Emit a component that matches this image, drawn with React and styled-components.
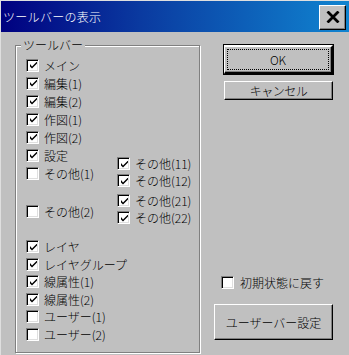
import React from 'react';
import styled, { createGlobalStyle } from 'styled-components';

const Global = createGlobalStyle`
  body {
    margin: 0;
    background: #c0c0c0;
  }
  * { box-sizing: border-box; }
`;

const FONT = `"Noto Sans CJK JP", "Noto Sans", sans-serif`;

function Check({ checked }) {
  return (
    <Box>
      {checked && (
        <svg width="7" height="7" viewBox="0 0 7 7">
          <path d="M0 2 L0 4.5 L2 6.5 L7 1.5 L7 -0.5 L2 4.5 Z" fill="#000" />
        </svg>
      )}
    </Box>
  );
}

function Item({ label, checked, h }) {
  return (
    <Row $h={h}>
      <Check checked={checked} />
      <Label>{label}</Label>
    </Row>
  );
}

function App() {
  return (
    <>
      <Global />
      <Window>
        <TitleBar>
          <Title>ツールバーの表示</Title>
          <CloseButton>
            <svg width="14" height="12" viewBox="0 0 14 12">
              <path d="M1.5 0.5 L12.5 11.5 M12.5 0.5 L1.5 11.5" stroke="#000" strokeWidth="2.8" />
            </svg>
          </CloseButton>
        </TitleBar>
        <Body>
          <GroupBox>
            <Legend>ツールバー</Legend>
            <List>
              <Item label="メイン" checked />
              <Item label="編集(1)" checked />
              <Item label="編集(2)" checked />
              <Item label="作図(1)" checked />
              <Item label="作図(2)" checked />
              <Split>
                <Column>
                  <Item label="設定" checked />
                  <Item label="その他(1)" />
                  <Gap $h={20} />
                  <Item label="その他(2)" />
                </Column>
                <SubColumn>
                  <Item label="その他(11)" checked h={17} />
                  <Item label="その他(12)" checked h={17} />
                  <Gap $h={3} />
                  <Item label="その他(21)" checked h={17} />
                  <Item label="その他(22)" checked h={17} />
                </SubColumn>
              </Split>
              <Gap $h={12} />
              <Item label="レイヤ" checked h={17.5} />
              <Item label="レイヤグループ" checked h={17.5} />
              <Item label="線属性(1)" checked h={17.5} />
              <Item label="線属性(2)" checked h={17.5} />
              <Item label="ユーザー(1)" h={17.5} />
              <Item label="ユーザー(2)" h={17.5} />
            </List>
          </GroupBox>
          <Side>
            <DefaultButton>
              <Focus>OK</Focus>
            </DefaultButton>
            <SmallButton>キャンセル</SmallButton>
            <Spacer />
            <ResetRow>
              <Check />
              <Label>初期状態に戻す</Label>
            </ResetRow>
            <BigButton>ユーザーバー設定</BigButton>
          </Side>
        </Body>
      </Window>
    </>
  );
}

const Window = styled.div`
  width: 349px;
  height: 355px;
  background: #c0c0c0;
  border-left: 1px solid #dfdfdf;
  border-top: 1px solid #dfdfdf;
  display: flex;
  flex-direction: column;
  font-family: ${FONT};
  font-weight: 300;
  overflow: hidden;
`;

const TitleBar = styled.div`
  height: 31px;
  display: flex;
  align-items: center;
  justify-content: space-between;
  padding: 0 3px 0 2px;
  background: linear-gradient(to right, #000080 0%, #0a3aa0 40%, #1084d0 100%);
`;

const Title = styled.div`
  color: #fff;
  font-size: 12px;
  letter-spacing: 0.3px;
`;

const CloseButton = styled.div`
  width: 27px;
  height: 25px;
  margin-top: 1px;
  background: #c0c0c0;
  border: 1px solid;
  border-color: #fff #000 #000 #fff;
  box-shadow: inset -1px -1px 0 #808080;
  display: flex;
  align-items: center;
  justify-content: center;
`;

const Body = styled.div`
  display: flex;
  padding: 13px 16px 0 14px;
`;

const GroupBox = styled.div`
  position: relative;
  width: 187px;
  height: 308px;
  border: 1px solid #808080;
  box-shadow: inset 1px 1px 0 #fff, 1px 1px 0 #fff;
`;

const Legend = styled.div`
  position: absolute;
  top: -9px;
  left: 5px;
  padding: 0 2px;
  background: #c0c0c0;
  font-size: 12px;
  line-height: 16px;
  color: #000;
`;

const List = styled.div`
  display: flex;
  flex-direction: column;
  padding: 10px 0 0 10px;
`;

const Row = styled.div`
  display: flex;
  align-items: center;
  height: ${(p) => p.$h || 18}px;
  gap: 5px;
`;

const Label = styled.span`
  font-size: 12px;
  color: #000;
  white-space: nowrap;
`;

const Box = styled.div`
  width: 13px;
  height: 13px;
  flex: none;
  background: #fff;
  border: 1px solid;
  border-color: #808080 #fff #fff #808080;
  box-shadow: inset 1px 1px 0 #000, inset -1px -1px 0 #dfdfdf;
  display: flex;
  align-items: center;
  justify-content: center;
  padding-left: 1px;
  padding-top: 1px;
`;

const Split = styled.div`
  display: flex;
`;

const Column = styled.div`
  display: flex;
  flex-direction: column;
  width: 91px;
`;

const SubColumn = styled.div`
  display: flex;
  flex-direction: column;
  padding-top: 9px;
`;

const Gap = styled.div`
  height: ${(p) => p.$h}px;
`;

const Side = styled.div`
  display: flex;
  flex-direction: column;
  align-items: flex-start;
  width: 119px;
  margin-left: 14px;
`;

const ButtonBase = styled.div`
  background: #c0c0c0;
  display: flex;
  align-items: center;
  justify-content: center;
  font-size: 12px;
  color: #000;
  border: 1px solid;
  border-color: #fff #000 #000 #fff;
  box-shadow: inset -1px -1px 0 #808080;
`;

const DefaultButton = styled(ButtonBase)`
  margin-left: 10px;
  width: 109px;
  height: 29px;
  outline: 1px solid #000;
  outline-offset: 0;
  border-width: 2px 2px 2px 1px;
  border-color: #fff #000 #000 #fff;
  padding: 2px;
`;

const Focus = styled.div`
  width: 100%;
  height: 100%;
  border: 1px dotted #000;
  display: flex;
  align-items: center;
  justify-content: center;
`;

const SmallButton = styled(ButtonBase)`
  margin-left: 10px;
  margin-top: 7px;
  width: 109px;
  height: 19px;
  letter-spacing: -0.5px;
`;

const Spacer = styled.div`
  height: 174px;
`;

const ResetRow = styled.div`
  display: flex;
  align-items: center;
  gap: 6px;
  margin-left: 7px;
  height: 17px;
`;

const BigButton = styled(ButtonBase)`
  margin-top: 13px;
  width: 119px;
  height: 36px;
  font-size: 12px;
`;

export default App;
